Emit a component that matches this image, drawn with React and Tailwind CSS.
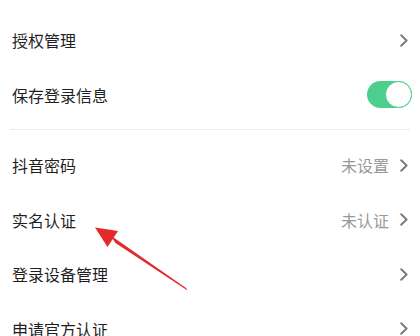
import { ChevronRight } from 'lucide-react';

const Row = ({ label, value, children }) => (
  <div className="flex h-[54.5px] items-center justify-between pl-3 pr-[10px]">
    <span className="text-[16px] text-[#1f1f1f]">{label}</span>
    <div className="flex items-center">
      {value && <span className="mr-[11px] text-[16px] text-[#999]">{value}</span>}
      {children}
    </div>
  </div>
);

const Chevron = () => (
  <svg width="8" height="13" viewBox="0 0 8 13" fill="none" className="mr-[2px]">
    <path d="M1.2 1.2 L6.6 6.5 L1.2 11.8" stroke="#7a7a7a" strokeWidth="1.9" strokeLinecap="round" strokeLinejoin="round" />
  </svg>
);

const Toggle = () => (
  <div className="relative -mr-[2px] h-[27px] w-[45px] rounded-full bg-[#4ccf8c]">
    <div className="absolute right-0 top-0 h-[27px] w-[27px] rounded-full border border-[#4ccf8c] bg-white" />
  </div>
);

const App = () => {
  return (
    <div className="relative h-[336px] w-[420px] overflow-hidden bg-white pt-[13px] font-['Noto_Sans_CJK_SC','Noto_Sans',sans-serif]">
      <Row label="授权管理">
        <Chevron />
      </Row>
      <Row label="保存登录信息">
        <Toggle />
      </Row>

      <div className="mx-[10px] mb-[8px] mt-[7px] h-px bg-[#ebebeb]" />

      <Row label="抖音密码" value="未设置">
        <Chevron />
      </Row>
      <Row label="实名认证" value="未认证">
        <Chevron />
      </Row>
      <Row label="登录设备管理">
        <Chevron />
      </Row>
      <Row label="申请官方认证">
        <Chevron />
      </Row>

      {/* red annotation arrow */}
      <svg className="absolute left-0 top-0" width="420" height="336" viewBox="0 0 420 336">
        <polygon points="95,227.5 118,231 107.5,247" fill="#e4292b" />
        <polygon points="110,235 115.5,243 187.5,290.5 186,288" fill="#e4292b" />
      </svg>
    </div>
  );
};

export default App;
